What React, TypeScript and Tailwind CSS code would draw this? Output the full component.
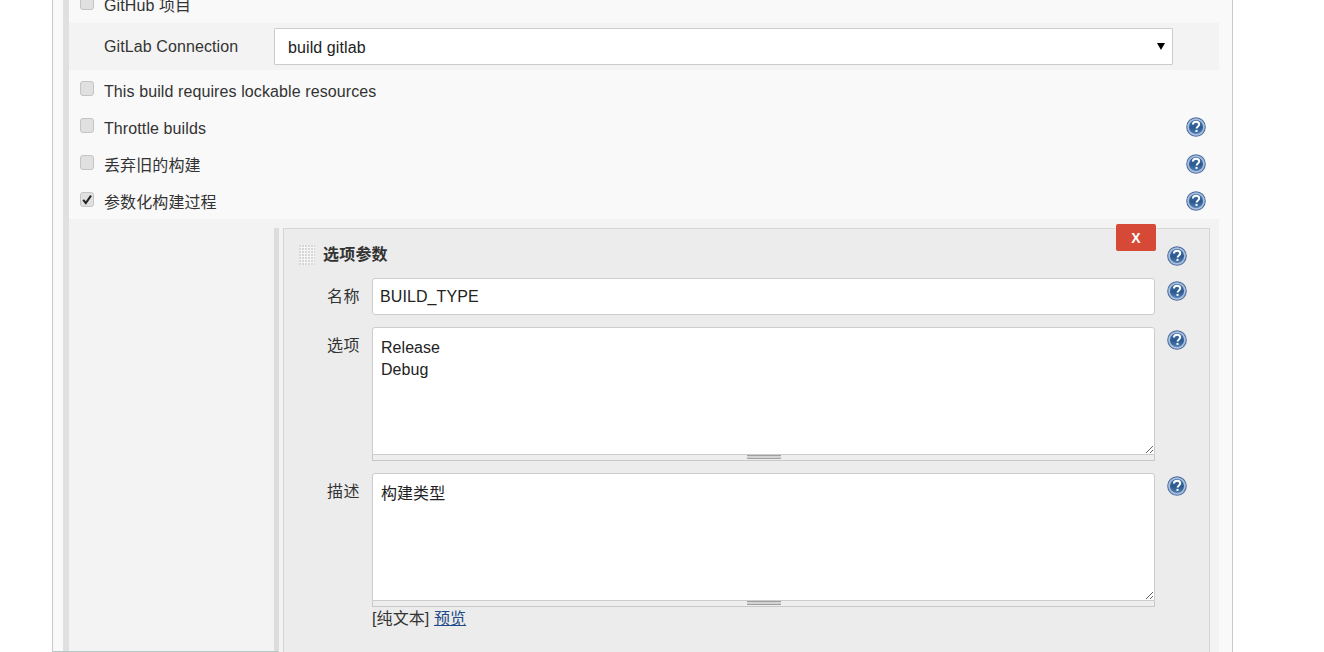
import React from 'react';

const HelpIcon: React.FC<{ className?: string }> = ({ className = '' }) => (
  <svg viewBox="0 0 20 20" className={`block h-5 w-5 shrink-0 ${className}`}>
    <defs>
      <linearGradient id="helpFill" x1="0" y1="0" x2="0" y2="1">
        <stop offset="0" stopColor="#3d6ea6" />
        <stop offset="0.55" stopColor="#2a5a90" />
        <stop offset="1" stopColor="#4f7fb5" />
      </linearGradient>
    </defs>
    <circle cx="10" cy="10" r="9.8" fill="#4a6c9e" />
    <circle cx="10" cy="10" r="8.8" fill="#a8bedb" />
    <circle cx="10" cy="10" r="7" fill="url(#helpFill)" />
    <path
      d="M6.9 7.6c0-1.9 1.4-2.9 3.2-2.9 1.8 0 3.1 1 3.1 2.6 0 2.2-2.6 2.3-2.6 4.3"
      fill="none"
      stroke="#fff"
      strokeWidth="2"
    />
    <rect x="9.5" y="12.9" width="2" height="2" fill="#fff" />
  </svg>
);

const Checkbox: React.FC<{ checked?: boolean }> = ({ checked }) => (
  <div className="mt-[-6px] h-[15px] w-[14px] shrink-0 rounded-[3px] border border-[#c4c4c4] bg-[#e0e0e0]">
    {checked && (
      <svg viewBox="0 0 12 13" className="block h-[13px] w-3">
        <path d="M2.2 6.8 4.8 10 10 2.6" fill="none" stroke="#222" strokeWidth="2" />
      </svg>
    )}
  </div>
);

const OptionRow: React.FC<{ label: string; checked?: boolean; help?: boolean }> = ({ label, checked, help }) => (
  <div className="flex h-[37px] items-center pl-[11px] pr-[13px]">
    <Checkbox checked={checked} />
    <span className="ml-[10px] flex-1 tracking-[0.1px]">{label}</span>
    {help && <HelpIcon className="mt-[-4px]" />}
  </div>
);

const Grippie = () => (
  <div className="flex h-[6px] justify-center border-x border-b border-[#c8c8c8] bg-[#eeeeee]">
    <div className="h-[4px] w-[34px] border-y border-[#a0a0a0] bg-[#d4d4d4]" />
  </div>
);

const AreaField: React.FC<{ value: string }> = ({ value }) => (
  <>
    <textarea
      readOnly
      value={value}
      className="block h-[128px] w-full resize-y rounded-t-[3px] border border-[#cccccc] bg-white px-2 pb-2 pt-[9px] leading-[22px] tracking-[0.05px] text-[#222] outline-none"
    />
    <Grippie />
  </>
);

const FieldLabel: React.FC<{ children: React.ReactNode; className?: string }> = ({ children, className = '' }) => (
  <div className={`w-[76px] shrink-0 text-right tracking-[0.5px] ${className}`}>{children}</div>
);

export default function App() {
  return (
    <div className="relative h-[652px] overflow-hidden bg-white font-['Liberation_Sans','Noto_Sans_CJK_SC',sans-serif] text-[16px] leading-[22px] text-[#333]">
      <div className="ml-[52px] h-full w-[1181px] border-x border-[#c8c8c8] bg-[#f9f9f9] pl-[10px]">
        <div className="h-full w-[1156px] border-l-[6px] border-[#e0e0e0]">
          {/* rows above the parameter block */}
          <div className="h-[23px] overflow-hidden">
            <div className="mt-[-13px] flex h-[37px] items-center pl-[11px]">
              <Checkbox />
              <span className="ml-[10px] tracking-[0.1px]">GitHub 项目</span>
            </div>
          </div>

          <div className="flex h-[47px] items-center bg-[#f3f3f3] pl-[35px]">
            <div className="w-[170px] shrink-0 tracking-[0.1px]">GitLab Connection</div>
            <div className="relative w-[899px]">
              <select className="block h-[37px] w-full appearance-none rounded-[1px] border border-[#cccccc] bg-white pl-[13px] pt-[2px] tracking-[0.1px] text-[#222] outline-none">
                <option>build gitlab</option>
              </select>
              <div className="absolute right-[8px] top-[15px] h-0 w-0 border-x-[4px] border-t-[7px] border-x-transparent border-t-black" />
            </div>
          </div>

          <div className="pt-[3px]">
            <OptionRow label="This build requires lockable resources" />
            <OptionRow label="Throttle builds" help />
            <OptionRow label="丢弃旧的构建" help />
            <div className="h-[35px]">
              <OptionRow label="参数化构建过程" checked help />
            </div>
          </div>

          {/* parameter block */}
          <div className="flex h-[445px] bg-[#f3f3f3] pt-[9px]">
            <div className="w-[205px] shrink-0" />
            <div className="w-[936px] border-l-[5px] border-[#dcdcdc] pl-[4px]">
              <div className="relative h-full border border-[#d6d6d6] bg-[#ececec]">
                <button className="absolute left-[832px] top-[-5px] h-[27px] w-[40px] rounded-[2px] bg-[#d64937] text-[14px] font-bold text-[#fff]">
                  X
                </button>

                <div className="flex h-[49px]">
                  <div className="flex w-[883px] items-start pl-[15px] pt-[16px]">
                    <svg viewBox="0 0 16 20" className="block h-5 w-4 shrink-0">
                      <defs>
                        <pattern id="dots" width="3" height="3" patternUnits="userSpaceOnUse">
                          <rect width="2" height="2" fill="#d6d6d6" />
                          <rect x="2" width="1" height="3" fill="#f6f6f6" />
                          <rect y="2" width="3" height="1" fill="#f6f6f6" />
                        </pattern>
                      </defs>
                      <rect width="16" height="20" fill="url(#dots)" />
                    </svg>
                    <span className="ml-2 mt-[-1px] font-bold tracking-[0.2px] text-[#333]">选项参数</span>
                  </div>
                  <HelpIcon className="mt-[17px]" />
                </div>

                <div className="flex">
                  <FieldLabel className="mt-[8px]">名称</FieldLabel>
                  <input
                    readOnly
                    value="BUILD_TYPE"
                    className="ml-[12px] block h-[37px] w-[783px] rounded-[3px] border border-[#cccccc] bg-white px-[7px] tracking-[0.1px] text-[#222] outline-none"
                  />
                  <HelpIcon className="ml-[12px] mt-[3px]" />
                </div>

                <div className="mt-[12px] flex">
                  <FieldLabel className="mt-[8px]">选项</FieldLabel>
                  <div className="ml-[12px] w-[783px]">
                    <AreaField value={'Release\nDebug'} />
                  </div>
                  <HelpIcon className="ml-[12px] mt-[3px]" />
                </div>

                <div className="mt-[12px] flex">
                  <FieldLabel className="mt-[8px]">描述</FieldLabel>
                  <div className="ml-[12px] w-[783px]">
                    <AreaField value="构建类型" />
                    <div className="pt-[1px] tracking-[0.1px]">
                      [纯文本] <a className="text-[#204a87] underline">预览</a>
                    </div>
                  </div>
                  <HelpIcon className="ml-[12px] mt-[3px]" />
                </div>
              </div>
            </div>
          </div>
        </div>
      </div>
      <div className="absolute bottom-0 left-[52px] h-px w-[226px] bg-[#b4c8c4]" />
    </div>
  );
}
